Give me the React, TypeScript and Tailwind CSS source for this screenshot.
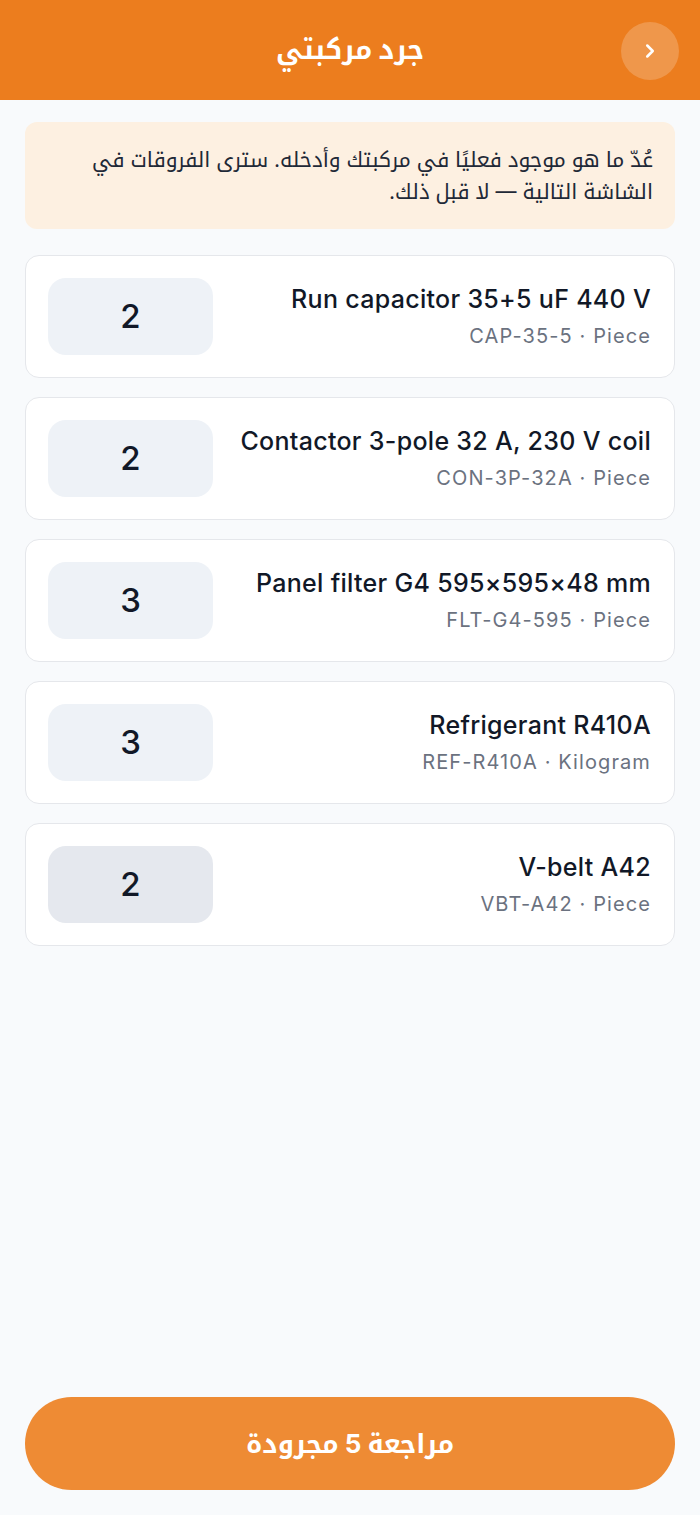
import { ChevronRight } from "lucide-react";

const items = [
  { name: "Run capacitor 35+5 uF 440 V", sku: "CAP-35-5", unit: "Piece", qty: 2 },
  { name: "Contactor 3-pole 32 A, 230 V coil", sku: "CON-3P-32A", unit: "Piece", qty: 2 },
  { name: "Panel filter G4 595×595×48 mm", sku: "FLT-G4-595", unit: "Piece", qty: 3 },
  { name: "Refrigerant R410A", sku: "REF-R410A", unit: "Kilogram", qty: 3 },
  { name: "V-belt A42", sku: "VBT-A42", unit: "Piece", qty: 2, focused: true },
];

export default function App() {
  return (
    <div
      dir="rtl"
      className="min-h-[1515px] flex flex-col bg-[#f8fafc] font-['Inter','Noto_Kufi_Arabic',sans-serif]"
    >
      {/* Header */}
      <div className="h-[100px] bg-[#ec7d1e] flex items-center justify-center relative shrink-0">
        <button className="absolute right-[21px] top-[22px] w-[58px] h-[58px] rounded-full bg-white/20 flex items-center justify-center text-white">
          <ChevronRight size={22} strokeWidth={2.75} />
        </button>
        <h1 className="text-white text-[27px] leading-[34px] font-bold">جرد مركبتي</h1>
      </div>

      <div className="flex-1 px-[25px] pt-[22px] flex flex-col gap-[19px]">
        {/* Notice */}
        <div className="bg-[#fdf0e1] rounded-[12px] pr-[22px] pl-[18px] h-[107px] flex flex-col justify-center text-[#1f2937] text-[21px] leading-[32px] mb-[7px]">
          <div className="whitespace-nowrap">عُدّ ما هو موجود فعليًا في مركبتك وأدخله. سترى الفروقات في</div>
          <div>الشاشة التالية — لا قبل ذلك.</div>
        </div>

        {items.map((it) => (
          <div
            key={it.sku}
            className="bg-white border border-[#e5e7eb] rounded-[14px] h-[123px] flex items-center justify-between pr-[23px] pl-[22px]"
          >
            <div className="flex flex-col items-start gap-[9px]">
              <div dir="ltr" className="text-[25px] leading-[30px] tracking-[0.3px] font-medium text-[#111827]">
                {it.name}
              </div>
              <div dir="ltr" className="text-[20px] leading-[26px] tracking-[1.1px] text-[#6b7280]">
                {it.sku} · {it.unit}
              </div>
            </div>
            <div
              className={`w-[165px] h-[77px] rounded-[18px] flex items-center justify-center text-[33px] font-medium text-[#111827] ${
                it.focused ? "bg-[#e5e8ee]" : "bg-[#eef2f7]"
              }`}
            >
              {it.qty}
            </div>
          </div>
        ))}
      </div>

      {/* Footer */}
      <div className="px-[25px] pb-[25px] pt-[20px]">
        <button className="w-full h-[93px] rounded-full bg-[#ee8b34] text-white text-[26px] font-bold">
          مراجعة 5 مجرودة
        </button>
      </div>
    </div>
  );
}
